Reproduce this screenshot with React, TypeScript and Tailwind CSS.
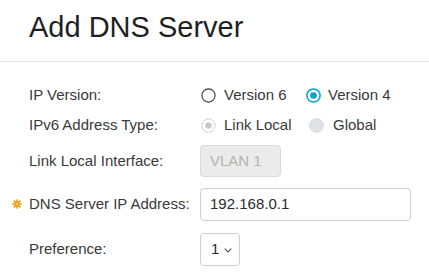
import type { ReactNode } from 'react'

const font = { fontFamily: '"Liberation Sans", Arial, sans-serif' }

function Radio({ state }: { state: 'off' | 'on' | 'disabledOn' | 'disabledOff' }) {
  if (state === 'on')
    return (
      <svg width="15" height="15" viewBox="0 0 15 15" className="shrink-0">
        <circle cx="7.5" cy="7.5" r="6.6" fill="white" stroke="#049fd9" strokeWidth="1.5" />
        <circle cx="7.5" cy="7.5" r="3.3" fill="#049fd9" />
      </svg>
    )
  if (state === 'disabledOn')
    return (
      <svg width="15" height="15" viewBox="0 0 15 15" className="shrink-0">
        <circle cx="7.5" cy="7.5" r="6.6" fill="white" stroke="#d0d0d0" strokeWidth="1" />
        <circle cx="7.5" cy="7.5" r="3.2" fill="#c9c9c9" />
      </svg>
    )
  if (state === 'disabledOff')
    return (
      <svg width="15" height="15" viewBox="0 0 15 15" className="shrink-0">
        <circle cx="7.5" cy="7.5" r="6.8" fill="#dfe2e6" stroke="#d3d6da" strokeWidth="1" />
      </svg>
    )
  return (
    <svg width="15" height="15" viewBox="0 0 15 15" className="shrink-0">
      <circle cx="7.5" cy="7.5" r="6.6" fill="white" stroke="#3a3a3a" strokeWidth="1.1" />
    </svg>
  )
}

function Required() {
  // small orange "sun" marker used for required fields
  const spikes = Array.from({ length: 8 }, (_, i) => i * 45)
  return (
    <svg width="10" height="10" viewBox="0 0 10 10" className="absolute left-[-17px] top-1/2 -translate-y-1/2">
      {spikes.map((a) => (
        <rect key={a} x="4.2" y="0.3" width="1.6" height="2.4" fill="#f6a01a" transform={`rotate(${a} 5 5)`} />
      ))}
      <circle cx="5" cy="5" r="2.9" fill="#f6a01a" />
      <circle cx="5" cy="5" r="1.2" fill="#fbd38a" />
    </svg>
  )
}

function Row({ label, req, className, children }: { label: string; req?: boolean; className: string; children: ReactNode }) {
  return (
    <div className={`flex items-center ${className}`}>
      <div className="w-[200px] shrink-0 whitespace-nowrap pl-[29px]">
        <span className="relative">
          {req && <Required />}
          {label}
        </span>
      </div>
      <div className="flex h-full items-center">{children}</div>
    </div>
  )
}

export default function App() {
  return (
    <div className="h-[274px] w-[429px] overflow-hidden bg-white text-[15px] text-[#39393b]" style={font}>
      <div className="h-[62px] border-b border-[#e6e6e6] pl-[29px] pt-[13px]">
        <h1 className="text-[29px] leading-[29px] text-[#1f1f1f]">Add DNS Server</h1>
      </div>

      <div className="flex flex-col pt-[18px]">
        <Row label="IP Version:" className="h-[30px]">
          <div className="flex w-[106px] items-center pl-[1px]">
            <Radio state="off" />
            <span className="ml-[8px]">Version 6</span>
          </div>
          <div className="flex items-center">
            <Radio state="on" />
            <span className="ml-[7px]">Version 4</span>
          </div>
        </Row>

        <Row label="IPv6 Address Type:" className="h-[30px]">
          <div className="flex w-[109px] items-center pl-[1px]">
            <Radio state="disabledOn" />
            <span className="ml-[8px]">Link Local</span>
          </div>
          <div className="flex items-center">
            <Radio state="disabledOff" />
            <span className="ml-[9px]">Global</span>
          </div>
        </Row>

        <Row label="Link Local Interface:" className="mt-[5px] h-[32px]">
          <div className="flex h-[32px] w-[81px] items-center rounded-[4px] border border-[#dadada] bg-[#ebebeb] pl-[9px] text-[#b3b3b3]">
            VLAN 1
          </div>
        </Row>

        <Row label="DNS Server IP Address:" req className="mt-[11px] h-[33px]">
          <div className="flex h-[33px] w-[211px] items-center rounded-[4px] border border-[#cfcfcf] bg-white pl-[9px] text-[#2a2a2a]">
            192.168.0.1
          </div>
        </Row>

        <Row label="Preference:" className="mt-[12px] h-[33px]">
          <div className="flex h-[33px] w-[40px] items-center rounded-[4px] border border-[#cfcfcf] bg-white pl-[10px] text-[#2a2a2a]">
            <span>1</span>
            <svg width="8" height="5" viewBox="0 0 8 5" className="ml-[5px] mt-[1px]">
              <path d="M0.7 0.7 L4 4 L7.3 0.7" fill="none" stroke="#555" strokeWidth="1.1" />
            </svg>
          </div>
        </Row>
      </div>
    </div>
  )
}
